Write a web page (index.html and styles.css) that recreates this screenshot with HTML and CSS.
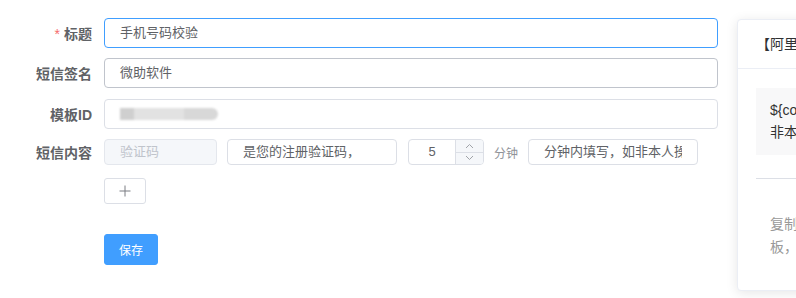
FILE: index.html
```html
<!DOCTYPE html>
<html>
  <head>
    <meta charset="UTF-8" />
    <title>短信模板</title>
    <link rel="stylesheet" href="styles.css">
  </head>
  <body>
    <div class="page">
      <div class="form">
        <div class="form-item item-1">
          <label class="label"><span class="req">*</span>标题</label>
          <div class="input is-focus">手机号码校验</div>
        </div>
        <div class="form-item item-2">
          <label class="label">短信签名</label>
          <div class="input is-hover">微助软件</div>
        </div>
        <div class="form-item item-3">
          <label class="label">模板ID</label>
          <div class="input"><span class="masked"><span class="m1"></span><span class="m2"></span><span class="m3"></span></span></div>
        </div>
        <div class="form-item item-4">
          <label class="label">短信内容</label>
          <div class="parts">
            <div class="input small disabled w-var">验证码</div>
            <div class="input small w-text">是您的注册验证码，</div>
            <div class="number">
              <span class="number-val">5</span>
              <span class="number-ctrl">
                <span class="ctrl up"><svg width="9" height="6" viewBox="0 0 9 6"><path d="M1 5 L4.5 1.5 L8 5" fill="none" stroke="#a0a3a8" stroke-width="1"/></svg></span>
                <span class="ctrl down"><svg width="9" height="6" viewBox="0 0 9 6"><path d="M1 1 L4.5 4.5 L8 1" fill="none" stroke="#a0a3a8" stroke-width="1"/></svg></span>
              </span>
            </div>
            <span class="unit">分钟</span>
            <div class="input small w-text"><span class="clip">分钟内填写，如非本人操作，请忽略</span></div>
          </div>
        </div>
        <div class="form-item item-add">
          <button class="btn-add"><svg width="12" height="12" viewBox="0 0 12 12"><path d="M6 0.5 V11.5 M0.5 6 H11.5" stroke="#7a7d82" stroke-width="1"/></svg></button>
        </div>
        <div class="form-item item-save">
          <button class="btn-primary">保存</button>
        </div>
      </div>

      <div class="card">
        <div class="card-header">【阿里云】短信模板预览</div>
        <div class="card-body">
          <div class="preview">
            <div class="line">${code}是您的注册验证码，请在5分钟内填写，如</div>
            <div class="line">非本人操作，请忽略本短信。</div>
          </div>
          <div class="divider"></div>
          <div class="tip">
            <div class="line">复制以上内容到阿里云控制台申请短信模</div>
            <div class="line">板，审核通过后即可使用。</div>
          </div>
        </div>
      </div>
    </div>
  </body>
</html>
```

FILE: styles.css
```css
html, body {
   margin: 0;
   padding: 0;
}
body {
   width: 796px;
   height: 298px;
   overflow: hidden;
   background: #fff;
   font-family: "Helvetica Neue", Helvetica, "Liberation Sans", "Noto Sans CJK SC", Arial, sans-serif;
   color: #606266;
}
.page {
   display: flex;
   align-items: flex-start;
}

/* form */
.form {
   flex: 0 0 718px;
   padding-top: 18px;
}
.form-item {
   display: flex;
   align-items: center;
}
.item-1 { margin-bottom: 10px; }
.item-2 { margin-bottom: 11px; }
.item-3 { margin-bottom: 10px; }
.item-4 { margin-bottom: 13px; }
.item-add { margin-bottom: 30px; padding-left: 104px; }
.item-save { padding-left: 104px; }

.label {
   flex: 0 0 104px;
   box-sizing: border-box;
   padding-right: 12px;
   text-align: right;
   font-size: 14px;
   font-weight: bold;
   color: #606266;
}
.req {
   color: #f56c6c;
   margin-right: 4px;
   font-weight: normal;
}

.input {
   box-sizing: border-box;
   flex: 1;
   height: 30px;
   line-height: 28px;
   padding: 0 15px;
   border: 1px solid #dcdfe6;
   border-radius: 4px;
   font-size: 13px;
   color: #606266;
   background: #fff;
   white-space: nowrap;
   overflow: hidden;
}
.input.is-focus {
   border-color: #409eff;
}
.input.is-hover {
   border-color: #c0c4cc;
}
.input.small {
   flex: none;
   height: 26px;
   line-height: 24px;
}
.input.disabled {
   background: #f5f7fa;
   border-color: #e4e7ed;
   color: #c0c4cc;
}
.w-var { width: 113px; }
.w-text { width: 170px; }
.clip {
   display: block;
   overflow: hidden;
}

.masked {
   display: inline-flex;
   align-items: center;
   height: 28px;
   filter: blur(1.2px);
}
.masked span {
   display: inline-block;
   height: 12px;
}
.m1 { width: 14px; background: #cfcfcf; }
.m2 { width: 50px; background: #e2e2e2; }
.m3 { width: 34px; background: #d8d8d8; border-radius: 0 6px 6px 0; }

.parts {
   display: flex;
   align-items: center;
}
.parts > .input + .input { margin-left: 10px; }

.number {
   display: flex;
   box-sizing: border-box;
   width: 76px;
   height: 26px;
   margin-left: 11px;
   border: 1px solid #dcdfe6;
   border-radius: 4px;
   overflow: hidden;
}
.number-val {
   flex: 1;
   text-align: center;
   line-height: 24px;
   font-size: 13px;
   color: #606266;
}
.number-ctrl {
   display: flex;
   flex-direction: column;
   width: 27px;
   border-left: 1px solid #dcdfe6;
   background: #f5f7fa;
}
.ctrl {
   flex: 1;
   display: flex;
   align-items: center;
   justify-content: center;
}
.ctrl.up {
   border-bottom: 1px solid #dcdfe6;
}
.unit {
   margin: 0 10px;
   font-size: 12px;
   color: #909399;
}

button {
   font-family: inherit;
   cursor: pointer;
}
.btn-add {
   display: flex;
   align-items: center;
   justify-content: center;
   width: 42px;
   height: 26px;
   padding: 0;
   border: 1px solid #dcdfe6;
   border-radius: 3px;
   background: #fff;
}
.btn-primary {
   width: 54px;
   height: 31px;
   padding: 0;
   border: 1px solid #409eff;
   border-radius: 3px;
   background: #409eff;
   color: #fff;
   font-size: 12px;
}

/* preview card */
.card {
   flex: 0 0 320px;
   margin: 19px 0 0 19px;
   border: 1px solid #ebeef5;
   border-radius: 4px;
   background: #fff;
   box-shadow: 0 2px 12px 0 rgba(0, 0, 0, 0.1);
   white-space: nowrap;
}
.card-header {
   height: 48px;
   line-height: 48px;
   padding: 0 18px;
   border-bottom: 1px solid #ebeef5;
   font-size: 14px;
   color: #303133;
}
.card-body {
   padding: 19px 18px 31px;
}
.preview {
   padding: 11px 14px 12px;
   background: #f8f8f9;
   font-size: 14px;
   line-height: 22px;
   color: #333;
}
.divider {
   height: 1px;
   margin: 23px 0 34px;
   background: #dcdfe6;
}
.tip {
   padding-left: 14px;
   font-size: 14px;
   line-height: 23px;
   color: #999;
}
```
